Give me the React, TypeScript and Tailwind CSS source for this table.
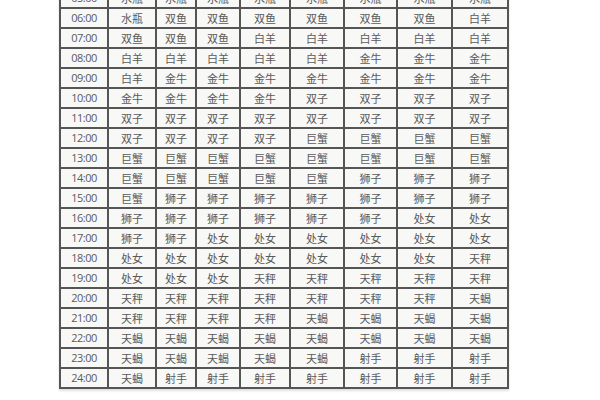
import React from "react";

const rows: [string, string[]][] = [
  ["05:00", ["水瓶", "水瓶", "水瓶", "水瓶", "水瓶", "水瓶", "水瓶", "水瓶"]],
  ["06:00", ["水瓶", "双鱼", "双鱼", "双鱼", "双鱼", "双鱼", "双鱼", "白羊"]],
  ["07:00", ["双鱼", "双鱼", "双鱼", "白羊", "白羊", "白羊", "白羊", "白羊"]],
  ["08:00", ["白羊", "白羊", "白羊", "白羊", "白羊", "金牛", "金牛", "金牛"]],
  ["09:00", ["白羊", "金牛", "金牛", "金牛", "金牛", "金牛", "金牛", "金牛"]],
  ["10:00", ["金牛", "金牛", "金牛", "金牛", "双子", "双子", "双子", "双子"]],
  ["11:00", ["双子", "双子", "双子", "双子", "双子", "双子", "双子", "双子"]],
  ["12:00", ["双子", "双子", "双子", "双子", "巨蟹", "巨蟹", "巨蟹", "巨蟹"]],
  ["13:00", ["巨蟹", "巨蟹", "巨蟹", "巨蟹", "巨蟹", "巨蟹", "巨蟹", "巨蟹"]],
  ["14:00", ["巨蟹", "巨蟹", "巨蟹", "巨蟹", "巨蟹", "狮子", "狮子", "狮子"]],
  ["15:00", ["巨蟹", "狮子", "狮子", "狮子", "狮子", "狮子", "狮子", "狮子"]],
  ["16:00", ["狮子", "狮子", "狮子", "狮子", "狮子", "狮子", "处女", "处女"]],
  ["17:00", ["狮子", "狮子", "处女", "处女", "处女", "处女", "处女", "处女"]],
  ["18:00", ["处女", "处女", "处女", "处女", "处女", "处女", "处女", "天秤"]],
  ["19:00", ["处女", "处女", "处女", "天秤", "天秤", "天秤", "天秤", "天秤"]],
  ["20:00", ["天秤", "天秤", "天秤", "天秤", "天秤", "天秤", "天秤", "天蝎"]],
  ["21:00", ["天秤", "天秤", "天秤", "天秤", "天蝎", "天蝎", "天蝎", "天蝎"]],
  ["22:00", ["天蝎", "天蝎", "天蝎", "天蝎", "天蝎", "天蝎", "天蝎", "天蝎"]],
  ["23:00", ["天蝎", "天蝎", "天蝎", "天蝎", "天蝎", "射手", "射手", "射手"]],
  ["24:00", ["天蝎", "射手", "射手", "射手", "射手", "射手", "射手", "射手"]],
];

const App = () => {
  return (
    <div className="w-[600px] h-[400px] overflow-hidden bg-white">
      <div className="ml-[59px] -mt-[13px] w-fit bg-[#555] p-[2px] shadow-[0_2px_2px_rgba(0,0,0,0.12)]">
        <div className="grid grid-cols-[46px_46px_38px_42px_48px_52px_51px_53px_54px] auto-rows-[18px] gap-[2px]">
          {rows.map(([time, signs]) => (
            <React.Fragment key={time}>
              <div className="flex items-center justify-center bg-[#f8f8f6] text-[11px] tracking-[-0.5px] text-[#5a5a5a] font-['Open_Sans',sans-serif]">
                {time}
              </div>
              {signs.map((sign, i) => (
                <div
                  key={time + i}
                  className="flex items-center justify-center bg-[#f8f8f6] text-[11px] text-[#5a5a5a] font-['Noto_Sans_CJK_SC',sans-serif]"
                >
                  {sign}
                </div>
              ))}
            </React.Fragment>
          ))}
        </div>
      </div>
    </div>
  );
};

export default App;
